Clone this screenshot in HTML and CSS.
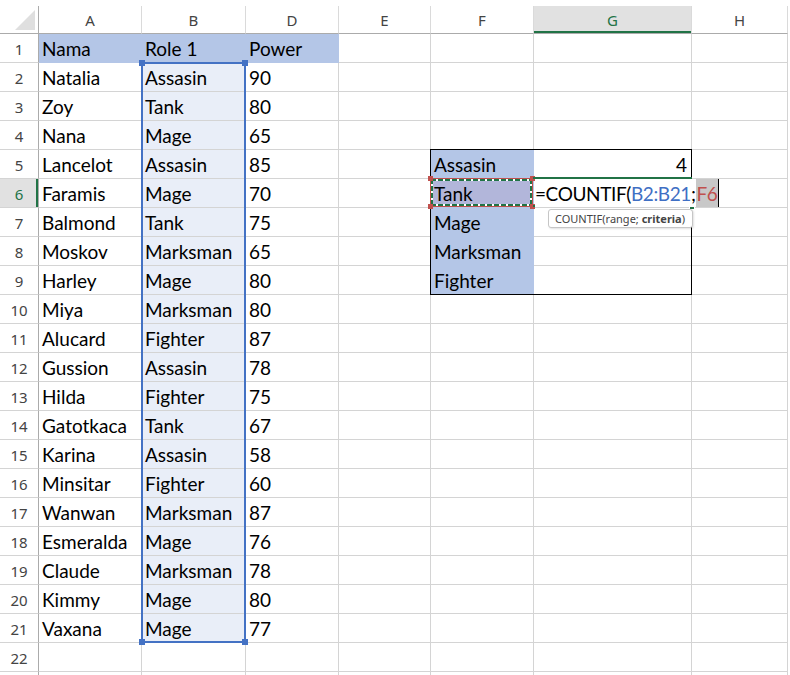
FILE: index.html
```html
<!DOCTYPE html>
<html lang="en">
<head>
    <meta charset="UTF-8">
    <title>COUNTIF</title>
    <link rel="stylesheet" href="styles.css">
</head>
<body>
    <div class="sheet">
        <!-- column headers -->
        <div class="ch corner"><svg width="38" height="27" viewBox="0 0 38 27"><polygon points="35,4 35,24 15,24" fill="#dfdfdf"/></svg></div>
        <div class="ch">A</div>
        <div class="ch">B</div>
        <div class="ch">D</div>
        <div class="ch">E</div>
        <div class="ch">F</div>
        <div class="ch on">G</div>
        <div class="ch">H</div>

        <div class="rh">1</div><div class="c fill">Nama</div><div class="c fill">Role 1</div><div class="c fill">Power</div><div class="c"></div><div class="c"></div><div class="c"></div><div class="c"></div>
        <div class="rh">2</div><div class="c">Natalia</div><div class="c rng">Assasin</div><div class="c">90</div><div class="c"></div><div class="c"></div><div class="c"></div><div class="c"></div>
        <div class="rh">3</div><div class="c">Zoy</div><div class="c rng">Tank</div><div class="c">80</div><div class="c"></div><div class="c"></div><div class="c"></div><div class="c"></div>
        <div class="rh">4</div><div class="c">Nana</div><div class="c rng">Mage</div><div class="c">65</div><div class="c"></div><div class="c"></div><div class="c"></div><div class="c"></div>
        <div class="rh">5</div><div class="c">Lancelot</div><div class="c rng">Assasin</div><div class="c">85</div><div class="c"></div><div class="c fill">Assasin</div><div class="c right">4</div><div class="c"></div>
        <div class="rh on">6</div><div class="c">Faramis</div><div class="c rng">Mage</div><div class="c">70</div><div class="c"></div>
        <div class="c ref">Tank
            <span class="ants">
                <i class="hd tl"></i><i class="hd tr"></i><i class="hd bl"></i><i class="hd br"></i>
            </span>
        </div>
        <div class="c active">
            <span class="edit">=COUNTIF(<span class="arg-b">B2:B21</span>;<span class="arg-f">F6</span></span>
            <span class="cellbox"><i class="fillhandle"></i></span>
            <span class="tip">COUNTIF(range; <b>criteria</b>)</span>
        </div>
        <div class="c"></div>
        <div class="rh">7</div><div class="c">Balmond</div><div class="c rng">Tank</div><div class="c">75</div><div class="c"></div><div class="c fill">Mage</div><div class="c"></div><div class="c"></div>
        <div class="rh">8</div><div class="c">Moskov</div><div class="c rng">Marksman</div><div class="c">65</div><div class="c"></div><div class="c fill">Marksman</div><div class="c"></div><div class="c"></div>
        <div class="rh">9</div><div class="c">Harley</div><div class="c rng">Mage</div><div class="c">80</div><div class="c"></div><div class="c fill">Fighter</div><div class="c"></div><div class="c"></div>
        <div class="rh">10</div><div class="c">Miya</div><div class="c rng">Marksman</div><div class="c">80</div><div class="c"></div><div class="c"></div><div class="c"></div><div class="c"></div>
        <div class="rh">11</div><div class="c">Alucard</div><div class="c rng">Fighter</div><div class="c">87</div><div class="c"></div><div class="c"></div><div class="c"></div><div class="c"></div>
        <div class="rh">12</div><div class="c">Gussion</div><div class="c rng">Assasin</div><div class="c">78</div><div class="c"></div><div class="c"></div><div class="c"></div><div class="c"></div>
        <div class="rh">13</div><div class="c">Hilda</div><div class="c rng">Fighter</div><div class="c">75</div><div class="c"></div><div class="c"></div><div class="c"></div><div class="c"></div>
        <div class="rh">14</div><div class="c">Gatotkaca</div><div class="c rng">Tank</div><div class="c">67</div><div class="c"></div><div class="c"></div><div class="c"></div><div class="c"></div>
        <div class="rh">15</div><div class="c">Karina</div><div class="c rng">Assasin</div><div class="c">58</div><div class="c"></div><div class="c"></div><div class="c"></div><div class="c"></div>
        <div class="rh">16</div><div class="c">Minsitar</div><div class="c rng">Fighter</div><div class="c">60</div><div class="c"></div><div class="c"></div><div class="c"></div><div class="c"></div>
        <div class="rh">17</div><div class="c">Wanwan</div><div class="c rng">Marksman</div><div class="c">87</div><div class="c"></div><div class="c"></div><div class="c"></div><div class="c"></div>
        <div class="rh">18</div><div class="c">Esmeralda</div><div class="c rng">Mage</div><div class="c">76</div><div class="c"></div><div class="c"></div><div class="c"></div><div class="c"></div>
        <div class="rh">19</div><div class="c">Claude</div><div class="c rng">Marksman</div><div class="c">78</div><div class="c"></div><div class="c"></div><div class="c"></div><div class="c"></div>
        <div class="rh">20</div><div class="c">Kimmy</div><div class="c rng">Mage</div><div class="c">80</div><div class="c"></div><div class="c"></div><div class="c"></div><div class="c"></div>
        <div class="rh">21</div><div class="c">Vaxana</div><div class="c rng">Mage</div><div class="c">77</div><div class="c"></div><div class="c"></div><div class="c"></div><div class="c"></div>
        <div class="rh">22</div><div class="c"></div><div class="c"></div><div class="c"></div><div class="c"></div><div class="c"></div><div class="c"></div><div class="c"></div>
        <div class="rh"></div><div class="c"></div><div class="c"></div><div class="c"></div><div class="c"></div><div class="c"></div><div class="c"></div><div class="c"></div>

        <!-- range finder for B2:B21 -->
        <div class="range-b">
            <i class="hd tl"></i><i class="hd tr"></i><i class="hd bl"></i><i class="hd br"></i>
        </div>
        <!-- outline around F5:G9 -->
        <div class="box-fg"></div>
    </div>
</body>
</html>
```

FILE: styles.css
```css
* {
    box-sizing: border-box;
}

body {
    margin: 0;
    padding-top: 6px;
    background: #fff;
    overflow: hidden;
    font-family: Lato, "Noto Sans", sans-serif;
}

.sheet {
    position: relative;
    display: grid;
    grid-template-columns: 39px 103px 104px 93px 92px 103px 158px 96px;
    grid-template-rows: 28px;
    grid-auto-rows: 29px;
    width: 788px;
}

/* headers */
.ch {
    border-right: 1px solid #dadada;
    border-bottom: 1px solid #ababab;
    font: 15px/29px "Noto Sans", sans-serif;
    color: #444;
    text-align: center;
}

.ch.corner {
    border-right-color: #ababab;
}

.ch.corner svg {
    display: block;
}

.ch.on {
    background: #e1e1e1;
    color: #217346;
    box-shadow: inset 0 -2px 0 #217346;
}

.rh {
    border-right: 1px solid #ababab;
    border-bottom: 1px solid #d4d4d4;
    font: 15px/30px "Noto Sans", sans-serif;
    color: #444;
    text-align: center;
}

.rh.on {
    background: #e1e1e1;
    color: #217346;
    box-shadow: inset -2px 0 0 #217346;
}

/* cells */
.c {
    border-right: 1px solid #d4d4d4;
    border-bottom: 1px solid #d4d4d4;
    padding-left: 3px;
    font-size: 19px;
    line-height: 30px;
    color: #000;
    white-space: nowrap;
    overflow: hidden;
}

.c.right {
    text-align: right;
    padding-right: 4px;
}

.c.fill {
    background: #b4c6e7;
    border-color: #b4c6e7;
}

.c.rng {
    background: #e9eef8;
}

/* F6, referenced by the formula */
.c.ref {
    position: relative;
    overflow: visible;
    background: #b2b6da;
    border-right-color: #b4c6e7;
    border-bottom-color: #b4c6e7;
}

.ants {
    position: absolute;
    top: -1px;
    left: -1px;
    right: 0;
    bottom: 0;
    border: 1px solid #c0504d;
    z-index: 2;
}

.ants::after {
    content: "";
    position: absolute;
    inset: 0;
    background:
        repeating-linear-gradient(90deg, #217346 0 5px, #fff 5px 7px) top / 100% 2px no-repeat,
        repeating-linear-gradient(90deg, #217346 0 5px, #fff 5px 7px) bottom / 100% 2px no-repeat,
        repeating-linear-gradient(180deg, #217346 0 5px, #fff 5px 7px) left / 2px 100% no-repeat,
        repeating-linear-gradient(180deg, #217346 0 5px, #fff 5px 7px) right / 2px 100% no-repeat;
}

.hd {
    position: absolute;
    width: 5px;
    height: 5px;
    z-index: 1;
}

.ants .hd {
    background: #c0504d;
}

.ants .tl { top: -3px; left: -3px; }
.ants .tr { top: -3px; right: -3px; }
.ants .bl { bottom: -3px; left: -3px; }
.ants .br { bottom: -3px; right: -3px; }

/* G6, being edited */
.c.active {
    position: relative;
    overflow: visible;
    padding-left: 1px;
}

.edit {
    position: relative;
    z-index: 3;
    display: inline-block;
    height: 28px;
    background: #fff;
    letter-spacing: -0.4px;
}

.arg-b {
    color: #3f6fc4;
}

.arg-f {
    display: inline-block;
    height: 28px;
    margin-left: 1px;
    padding-right: 1px;
    color: #c0504d;
    background: #c8c8c8;
    border-right: 1px solid #000;
}

.cellbox {
    position: absolute;
    top: -2px;
    left: -1px;
    right: -1px;
    bottom: 0;
    border-top: 2px solid #217346;
    border-bottom: 2px solid #217346;
    z-index: 2;
}

.fillhandle {
    position: absolute;
    right: -3px;
    bottom: -5px;
    width: 6px;
    height: 6px;
    background: #217346;
    border: 1px solid #fff;
}

.tip {
    position: absolute;
    left: 14px;
    top: 30px;
    z-index: 4;
    height: 19px;
    padding: 0 7px 0 6px;
    background: #fff;
    border: 1px solid #c6c6c6;
    border-radius: 3px;
    box-shadow: 1px 1px 2px rgba(0, 0, 0, 0.12);
    font: 11px/17px "Noto Sans", sans-serif;
    color: #444;
}

/* overlays */
.range-b {
    position: absolute;
    left: 141px;
    top: 56px;
    width: 105px;
    height: 581px;
    border: 2px solid #4472c4;
    z-index: 1;
}

.range-b .hd {
    width: 6px;
    height: 6px;
    background: #4472c4;
}

.range-b .tl { top: -4px; left: -4px; }
.range-b .tr { top: -4px; right: -4px; }
.range-b .bl { bottom: -4px; left: -4px; }
.range-b .br { bottom: -4px; right: -4px; }

.box-fg {
    position: absolute;
    left: 430px;
    top: 143px;
    width: 262px;
    height: 146px;
    border: 1px solid #000;
    z-index: 1;
}
```
